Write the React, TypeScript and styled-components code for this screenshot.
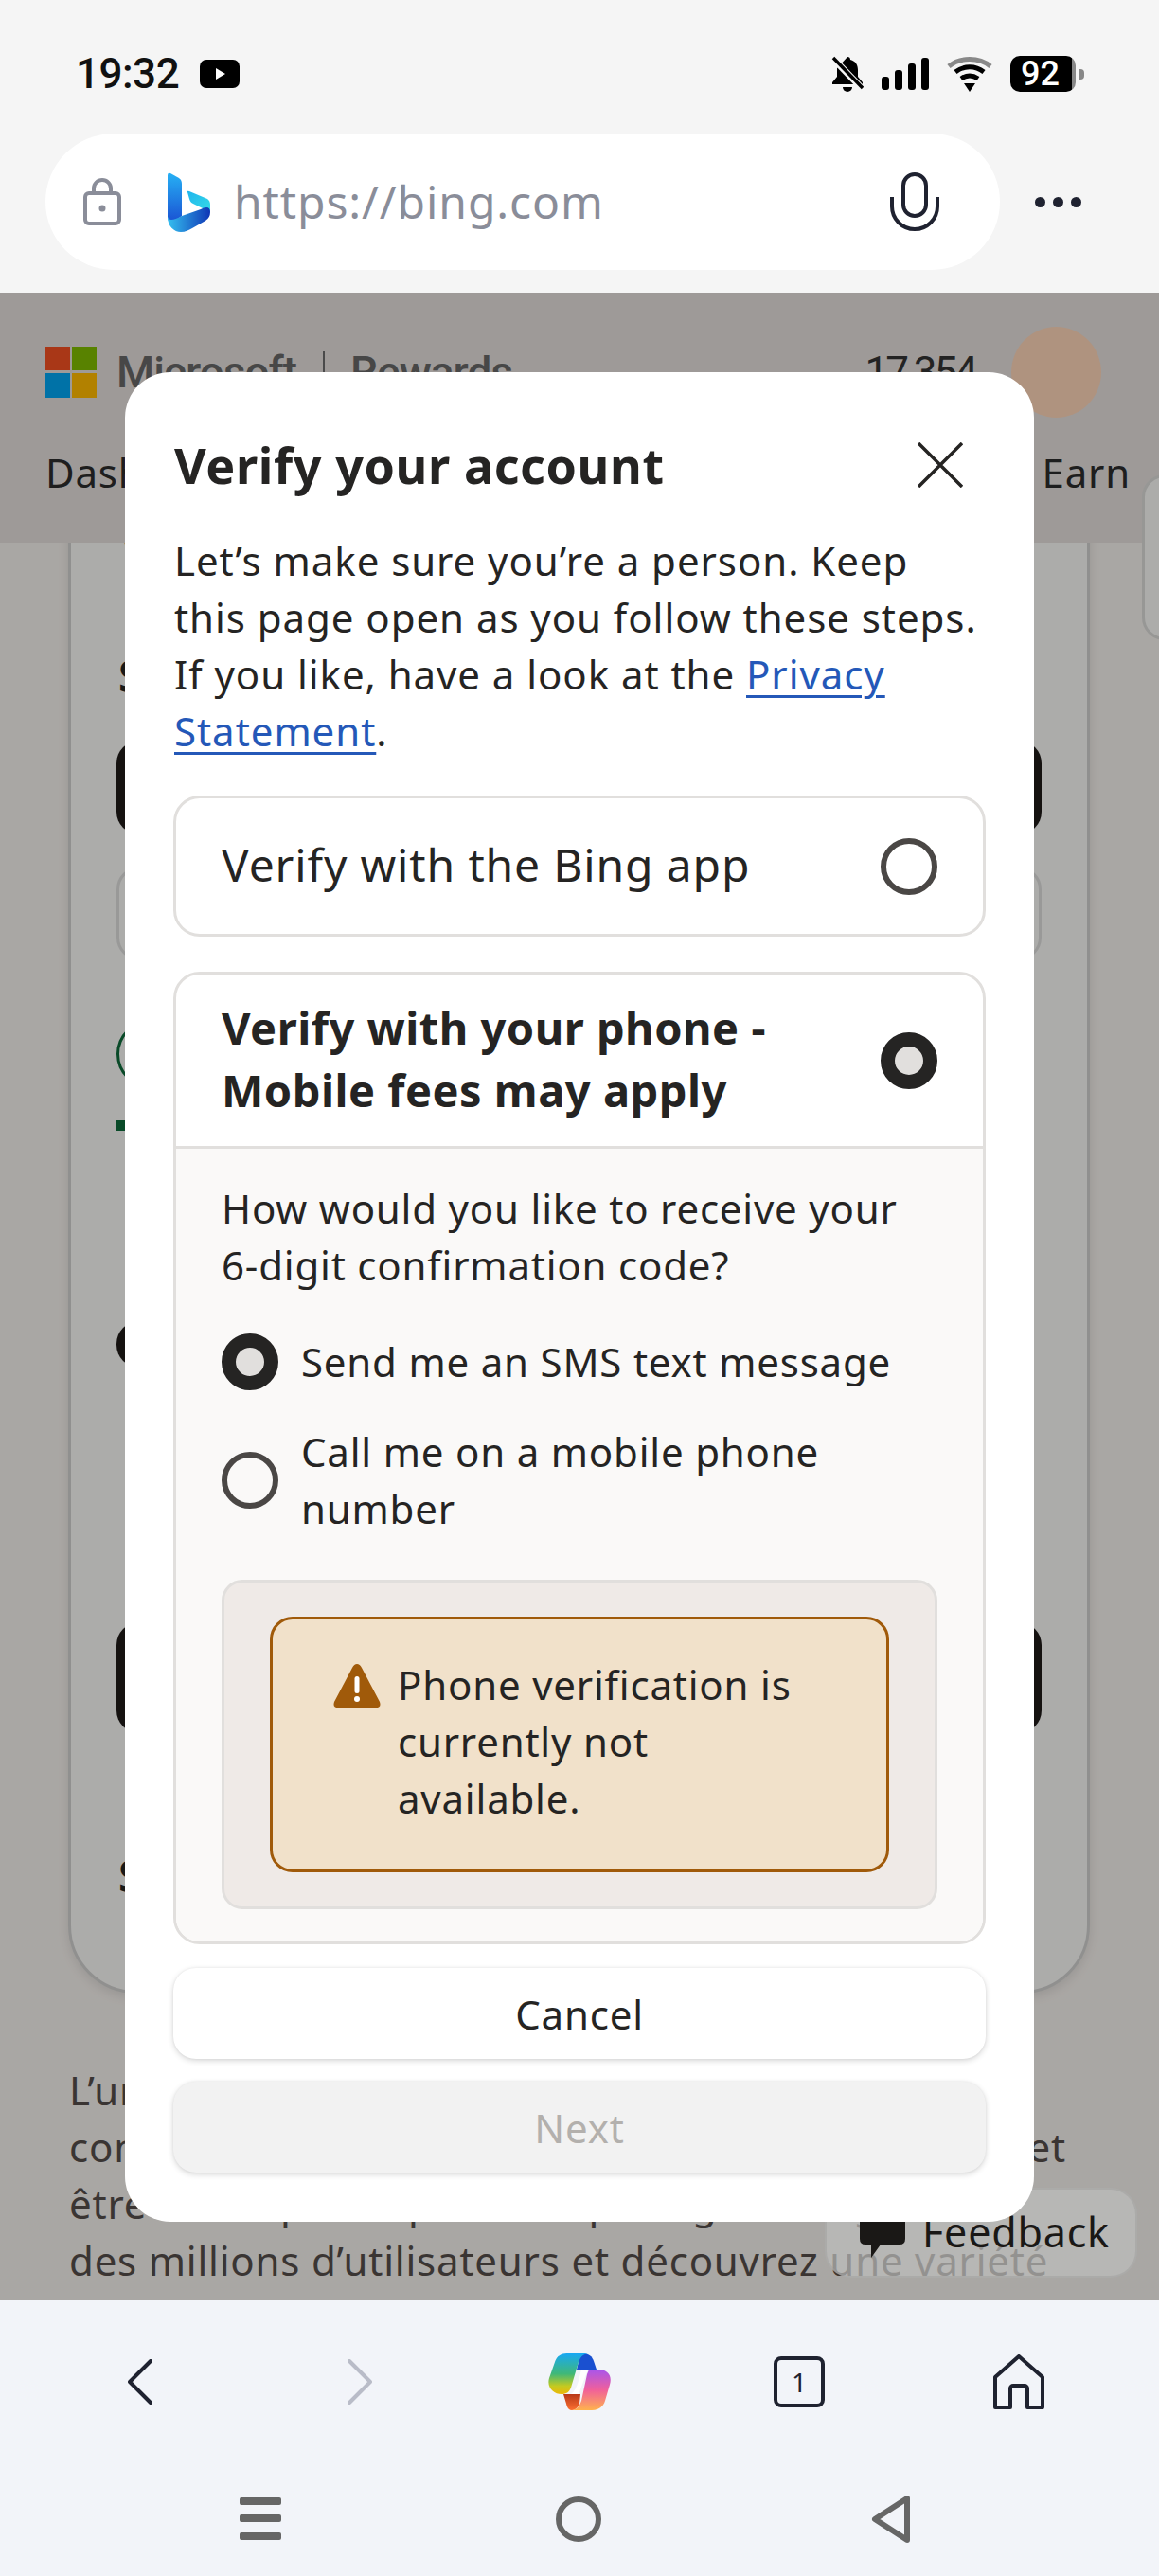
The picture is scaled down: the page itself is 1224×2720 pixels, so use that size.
import * as React from "react"
import styled, { createGlobalStyle } from "styled-components"

const GlobalStyle = createGlobalStyle`
  html, body {
    margin: 0;
    padding: 0;
    background: #f5f5f5;
  }
  * {
    box-sizing: border-box;
  }
`

const Screen = styled.div`
  width: 1224px;
  height: 2720px;
  display: flex;
  flex-direction: column;
  overflow: hidden;
  font-family: "Noto Sans", "Open Sans", sans-serif;
  letter-spacing: 0.8px;
  color: #252423;
`

/* top chrome */
const StatusBar = styled.div`
  height: 141px;
  padding: 56px 80px 0;
  display: flex;
  background: #f5f5f5;
`
const StatusLeft = styled.div`
  display: flex;
  align-items: center;
  gap: 22px;
  height: 44px;
`
const Clock = styled.span`
  font-family: Roboto, sans-serif;
  font-size: 44px;
  font-weight: 500;
  line-height: 44px;
  letter-spacing: -0.5px;
  color: #111;
`
const StatusRight = styled.div`
  margin-left: auto;
  display: flex;
  align-items: center;
  height: 44px;
  gap: 19px;
`
const Battery = styled.div`
  width: 69px;
  height: 38px;
  border-radius: 10px;
  background: linear-gradient(90deg, #000 0 65px, #888 65px);
  color: #fff;
  font-family: Roboto, sans-serif;
  font-size: 36px;
  font-weight: 500;
  letter-spacing: 0;
  line-height: 38px;
  text-align: center;
  padding-right: 6px;
`
const BatteryWrap = styled.div`
  display: flex;
  align-items: center;
  gap: 4px;
  margin-right: -1px;
`
const BatteryNub = styled.div`
  width: 5px;
  height: 11px;
  border-radius: 0 4px 4px 0;
  background: #888;
`
const AddressRow = styled.div`
  height: 168px;
  padding-left: 48px;
  display: flex;
  background: #f5f5f5;
`
const AddressPill = styled.div`
  width: 1008px;
  height: 144px;
  border-radius: 72px;
  background: #fff;
  display: flex;
  align-items: center;
  padding-left: 40px;
`
const LockGap = styled.span`
  width: 49px;
`
const Url = styled.span`
  margin-left: 25px;
  font-size: 48px;
  line-height: 60px;
  letter-spacing: 0.9px;
  color: #8a8d99;
`
const MicSlot = styled.div`
  margin-left: auto;
  margin-right: 64px;
  display: flex;
`
const MoreDots = styled.div`
  margin: 72px 0 0 37px;
  height: 0;
  display: flex;
  gap: 8px;
  align-items: center;
`
const Dot = styled.i`
  width: 11px;
  height: 11px;
  border-radius: 50%;
  background: #1f2230;
`

/* dimmed page behind the dialog */
const Page = styled.div`
  flex: 1;
  position: relative;
  overflow: hidden;
  background: #f3efeb;
`
const PageHeader = styled.div`
  position: relative;
  z-index: 1;
  height: 264px;
  background: #e2ddda;
  padding: 57px 61px 0 48px;
`
const BrandRow = styled.div`
  display: flex;
  align-items: center;
  height: 54px;
`
const BrandName = styled.span`
  margin-left: ${p => p.$left}px;
  font-family: Roboto, sans-serif;
  font-size: 46px;
  font-weight: 500;
  letter-spacing: -1px;
  color: #666;
`
const BrandDivider = styled.i`
  width: 2px;
  height: 44px;
  margin: 0 27px 0 28px;
  background: #6b6b6b;
`
const Points = styled.span`
  margin-left: auto;
  margin-right: 38px;
  font-family: Roboto, sans-serif;
  font-size: 44px;
  letter-spacing: -3px;
  color: #333;
`
const Avatar = styled.div`
  width: 95px;
  height: 96px;
  border-radius: 50%;
  background: #fbd3b7;
`
const TabRow = styled.div`
  display: flex;
  justify-content: space-between;
  margin: 50px -31px 0 0;
  font-size: 42px;
  color: #2b2b2b;
`
const ContentCard = styled.div`
  margin: -60px 73px 0 72px;
  height: 1592px;
  padding: 0 50px;
  border: 3px solid #cfcfcd;
  border-radius: 0 0 72px 72px;
  background: #f6f6f4;
  box-shadow: 0 4px 12px rgba(0, 0, 0, 0.1);
`
const CardHeading = styled.div`
  font-size: 46px;
  line-height: 60px;
  font-weight: 700;
  margin-top: ${p => p.$top}px;
`
const DarkButton = styled.div`
  height: ${p => p.$height}px;
  margin: ${p => p.$top}px -2px 0;
  border-radius: 24px;
  background: #1f1b18;
`
const GhostButton = styled.div`
  height: 99px;
  margin: 34px -2px 0;
  border-radius: 24px;
  border: 3px solid #dcdcda;
`
const GreenRing = styled.div`
  width: 72px;
  height: 72px;
  margin: 63px 0 0 -2px;
  border-radius: 50%;
  border: 3px solid #0e6b3a;
`
const GreenBar = styled.div`
  width: 40px;
  height: 11px;
  margin: 34px 0 0 -2px;
  background: #0e6b3a;
`
const DarkPill = styled.div`
  width: 60px;
  height: 49px;
  margin: 201px 0 0 -2px;
  border-radius: 24px;
  background: #1f1b18;
`
const Paragraph = styled.div`
  margin: 72px 0 0 73px;
  width: 1100px;
  font-size: 42px;
  line-height: 60px;
  color: #534d49;
`
const ParagraphLine = styled.div`
  white-space: nowrap;
`
const JustifiedLine = styled.div`
  width: 1053px;
  text-align: justify;
  text-align-last: justify;
`
const Scrim = styled.div`
  position: absolute;
  inset: 0;
  z-index: 2;
  background: rgba(0, 0, 0, 0.3);
`
const EdgeTab = styled.div`
  position: absolute;
  right: -10px;
  top: 192px;
  z-index: 1;
  width: 28px;
  height: 175px;
  border: 3px solid #d8d8d6;
  border-radius: 24px 0 0 24px;
  background: #f6f6f4;
`
const FeedbackButton = styled.div`
  position: absolute;
  z-index: 3;
  left: 871px;
  top: 2001px;
  width: 330px;
  height: 95px;
  border-radius: 28px;
  border: 2px solid rgba(160, 160, 158, 0.5);
  background: rgba(190, 190, 188, 0.68);
  display: flex;
  align-items: center;
  gap: 18px;
  padding: 0 0 2px 35px;
  font-size: 43px;
  color: #1a1816;
`
const FeedbackGlyph = styled.svg`
  flex: none;
  margin-top: 10px;
`

/* dialog */
const Dialog = styled.div`
  position: absolute;
  z-index: 4;
  left: 132px;
  top: 84px;
  width: 960px;
  height: 1953px;
  padding: 62px 51px 0;
  border-radius: 48px;
  background: #fff;
  display: flex;
  flex-direction: column;
`
const DialogHead = styled.div`
  display: flex;
  align-items: center;
  justify-content: space-between;
  padding: 0 24px 0 1px;
`
const DialogTitle = styled.h2`
  margin: 0;
  font-size: 52px;
  line-height: 72px;
  font-weight: 700;
  letter-spacing: 0.6px;
`
const Intro = styled.p`
  margin: 35px 0 38px;
  padding-left: 1px;
  font-size: 42px;
  line-height: 60px;
  letter-spacing: 0.95px;
`
const Link = styled.a`
  color: #2458b8;
  text-decoration: underline;
  text-decoration-thickness: 3px;
  text-underline-offset: 6px;
`
const OptionCard = styled.div`
  border: 3px solid #e1dfdd;
  border-radius: 28px;
  overflow: hidden;
  margin-bottom: ${p => p.$gap}px;
`
const OptionHead = styled.div`
  min-height: ${p => p.$min}px;
  padding: 0 48px;
  display: flex;
  align-items: center;
  justify-content: space-between;
  font-size: ${p => (p.$active ? 47 : 48)}px;
  line-height: 66px;
  font-weight: ${p => (p.$active ? 700 : 400)};
  letter-spacing: ${p => (p.$active ? 0.5 : 0.85)}px;
`
const OptionLabel = styled.span`
  margin-top: -3px;
`
const Radio = styled.span`
  flex: none;
  width: 60px;
  height: 60px;
  border-radius: 50%;
  border: ${p => (p.$checked ? "15px solid #252423" : "6px solid #4a4745")};
  background: ${p => (p.$checked ? "#e1dfdd" : "transparent")};
`
const OptionBody = styled.div`
  border-top: 3px solid #e1dfdd;
  background: #faf9f8;
  padding: 33px 48px 34px;
  font-size: 42px;
  line-height: 60px;
`
const Question = styled.div`
  margin-bottom: 42px;
`
const ChoiceRow = styled.div`
  display: flex;
  align-items: center;
  gap: 24px;
  margin-bottom: ${p => p.$gap}px;
`
const NoticeBox = styled.div`
  padding: 36px 48px;
  border: 3px solid #e1dfdd;
  border-radius: 22px;
  background: #efeae7;
`
const NoticeInner = styled.div`
  height: 270px;
  padding: 39px 80px 0 64px;
  border: 3px solid #a05a0a;
  border-radius: 24px;
  background: #f1e1ca;
  display: flex;
  gap: 18px;
`
const ActionButton = styled.div`
  height: 96px;
  margin-top: ${p => p.$top}px;
  border-radius: 24px;
  background: ${p => (p.$disabled ? "#f2f2f2" : "#fff")};
  color: ${p => (p.$disabled ? "#b3b0ad" : "#252423")};
  box-shadow: 0 2px 6px rgba(0, 0, 0, 0.16), 0 0 3px rgba(0, 0, 0, 0.06);
  display: flex;
  align-items: center;
  justify-content: center;
  font-size: 42px;
`

/* bottom chrome */
const Toolbar = styled.div`
  height: 291px;
  background: #f2f4f9;
  display: flex;
  flex-direction: column;
`
const ToolRow = styled.div`
  display: grid;
  grid-template-columns: repeat(5, 232px);
  justify-content: center;
  justify-items: center;
  align-items: center;
  height: 117px;
  margin-top: 27px;
`
const NavRow = styled.div`
  display: grid;
  grid-template-columns: 338px 333px 328px;
  justify-content: center;
  justify-items: center;
  align-items: center;
  margin-top: 62px;
  padding-right: 13px;
`
const TabCount = styled.div`
  width: 54px;
  height: 54px;
  border: 4px solid #1f2230;
  border-radius: 8px;
  text-align: center;
  font-size: 28px;
  letter-spacing: 0;
  line-height: 46px;
  color: #1f2230;
`
const WarningGlyph = styled.svg`
  flex: none;
  margin-top: 7px;
`

const BellOff = () => (
  <svg width="34" height="40" viewBox="0 0 34 40">
    <path d="M17 2a3 3 0 0 1 3 3c6 1.500 8 6 8 11v7l5 6v2H1v-2l5-6v-9z" fill="#000" />
    <path d="M12 34h10a5 5 0 0 1-10 0z" fill="#000" />
    <path d="M1 3l32 33" stroke="#f5f5f5" strokeWidth="7" />
    <path d="M2 3l31 32" stroke="#000" strokeWidth="3.500" />
  </svg>
)

const Signal = () => (
  <svg width="50" height="34" viewBox="0 0 50 34" fill="#000">
    <rect x="0" y="20" width="8" height="14" rx="3" />
    <rect x="14" y="13" width="8" height="21" rx="3" />
    <rect x="28" y="6" width="8" height="28" rx="3" />
    <rect x="42" y="0" width="8" height="34" rx="3" />
  </svg>
)

const Wifi = () => (
  <svg width="48" height="38" viewBox="0 0 48 38" fill="none">
    <path d="M2 11c12-10 32-10 44 0" stroke="#888" strokeWidth="5" />
    <path d="M9 17c9-7 21-7 30 0" stroke="#000" strokeWidth="5" />
    <path d="M15 24c6-4 12-4 18 0" stroke="#000" strokeWidth="5" />
    <path d="M18 29h12l-6 9z" fill="#000" />
  </svg>
)

const Lock = () => (
  <svg width="40" height="50" viewBox="0 0 40 50" fill="none">
    <rect x="2" y="16" width="36" height="32" rx="4" stroke="#8a8d99" strokeWidth="4" />
    <path d="M11 16V11a9 9 0 0 1 18 0v5" stroke="#8a8d99" strokeWidth="4" />
    <circle cx="20" cy="32" r="3.500" fill="#8a8d99" />
  </svg>
)

const BingLogo = () => (
  <svg width="45" height="63" viewBox="0 0 45 63">
    <defs>
      <linearGradient id="bingStem" x1="0" y1="0" x2="0" y2="1">
        <stop offset="0" stopColor="#26b0f4" />
        <stop offset="1" stopColor="#1a4fd2" />
      </linearGradient>
      <linearGradient id="bingRibbon" x1="0" y1="0" x2="1" y2="0">
        <stop offset="0" stopColor="#35c0f0" />
        <stop offset="1" stopColor="#0f35b5" />
      </linearGradient>
      <linearGradient id="bingLeaf" x1="0" y1="0" x2="1" y2="1">
        <stop offset="0" stopColor="#1fb4ee" />
        <stop offset="1" stopColor="#36dce6" />
      </linearGradient>
    </defs>
    <path d="M21 21q-1-2 2-1l19 8q3 2 3 6v8L27 33q-3-1-4-5z" fill="url(#bingLeaf)" />
    <path d="M0 3q0-3 3-2l9 5q3 2 3 6v34L4 54Q0 52 0 47z" fill="url(#bingStem)" />
    <path d="M0 47c0 10 7 16 14 16 5 0 8-2 12-4l14-8q5-3 5-9 0-5-4-5-3 0-6 2L15 46Q8 50 4 50 1 50 0 47z" fill="url(#bingRibbon)" />
  </svg>
)

const Mic = () => (
  <svg width="52" height="62" viewBox="0 0 52 62" fill="none" stroke="#1f2230" strokeWidth="4">
    <rect x="14" y="2" width="24" height="44" rx="12" />
    <path d="M2 26v10a24 24 0 0 0 48 0V26" />
  </svg>
)

const MsLogo = () => (
  <svg width="54" height="54" viewBox="0 0 54 54">
    <rect width="26" height="25" fill="#f25022" />
    <rect x="28" width="26" height="25" fill="#7fba00" />
    <rect y="28" width="26" height="26" fill="#00a4ef" />
    <rect x="28" y="28" width="26" height="26" fill="#ffb900" />
  </svg>
)

const CloseIcon = () => (
  <svg width="48" height="48" viewBox="0 0 48 48" stroke="#252423" strokeWidth="3.500">
    <path d="M1 1l46 46M47 1L1 47" />
  </svg>
)

const WarningIcon = () => (
  <WarningGlyph width="50" height="48" viewBox="0 0 50 48">
    <path d="M25 1q3 0 5 4l19 36q2 6-4 6H5q-6 0-4-6L20 5q2-4 5-4z" fill="#a05a0a" />
    <rect x="22.500" y="14" width="5" height="18" rx="2.500" fill="#fff" />
    <circle cx="25" cy="38" r="3" fill="#fff" />
  </WarningGlyph>
)

const Chevron = ({ left, color }: { left?: boolean; color: string }) => (
  <svg width="26" height="48" viewBox="0 0 26 48" fill="none" stroke={color} strokeWidth="4" strokeLinecap="round" strokeLinejoin="round">
    <path d={left ? "M24 2L2 24l22 22" : "M2 2l22 22L2 46"} />
  </svg>
)

const CopilotLogo = () => (
  <svg width="66" height="60" viewBox="0 0 66 60">
    <defs>
      <linearGradient id="cpLeft" x1="0" y1="0" x2="0" y2="1">
        <stop offset="0" stopColor="#18a8f4" />
        <stop offset="0.5" stopColor="#40b878" />
        <stop offset="0.8" stopColor="#c4ca20" />
        <stop offset="1" stopColor="#ecb808" />
      </linearGradient>
      <linearGradient id="cpRight" x1="0" y1="0" x2="0" y2="1">
        <stop offset="0" stopColor="#a855ec" />
        <stop offset="0.5" stopColor="#f0609a" />
        <stop offset="1" stopColor="#ffb24e" />
      </linearGradient>
      <linearGradient id="cpLow" x1="0" y1="0" x2="0" y2="1">
        <stop offset="0" stopColor="#b83818" />
        <stop offset="1" stopColor="#fb7030" />
      </linearGradient>
    </defs>
    <path d="M34 0C44 0 46 3 48 8l3 9H30z" fill="#1a50d0" />
    <path d="M42 17L32 43H24c4-3 6-8 8-14l3-12z" fill="#fff" />
    <path d="M16 43h18l-1 10c-2 5-5 7-8 7s-5-2-6-7z" fill="url(#cpLow)" />
    <path d="M14 1c2-1 4-1 8-1h20c-6 1-8 4-10 9l-8 27c-2 5-5 7-10 7C6 43-2 36 1 26L7 9c2-5 3-6 7-8z" fill="url(#cpLeft)" />
    <path d="M43 17h11c8 0 14 6 11 16l-5 17c-2 7-8 10-14 10H25c6-1 8-5 10-10l6-28z" fill="url(#cpRight)" />
  </svg>
)

const HomeIcon = () => (
  <svg width="54" height="58" viewBox="0 0 54 58" fill="none" stroke="#1f2230" strokeWidth="4" strokeLinejoin="round">
    <path d="M2 24L27 2l25 22v32H36V36a3 3 0 0 0-3-3H21a3 3 0 0 0-3 3v20H2z" />
  </svg>
)

const MenuIcon = () => (
  <svg width="44" height="46" viewBox="0 0 44 46" fill="#666">
    <rect width="44" height="8" y="0" rx="2" />
    <rect width="44" height="8" y="18" rx="2" />
    <rect width="44" height="8" y="37" rx="2" />
  </svg>
)

const HomeCircle = () => (
  <svg width="48" height="48" viewBox="0 0 48 48" fill="none" stroke="#666" strokeWidth="6">
    <circle cx="24" cy="24" r="21" />
  </svg>
)

const BackTriangle = () => (
  <svg width="42" height="50" viewBox="0 0 42 50" fill="none" stroke="#666" strokeWidth="6" strokeLinejoin="round">
    <path d="M38 3v44L4 25z" />
  </svg>
)

const YouTubeIcon = () => (
  <svg width="42" height="30" viewBox="0 0 42 30">
    <rect width="42" height="30" rx="7" fill="#000" />
    <path d="M17 9l10 6-10 6z" fill="#fff" />
  </svg>
)

export default function App() {
  return (
    <Screen>
      <GlobalStyle />
      <StatusBar>
        <StatusLeft>
          <Clock>19:32</Clock>
          <YouTubeIcon />
        </StatusLeft>
        <StatusRight>
          <BellOff />
          <Signal />
          <Wifi />
          <BatteryWrap>
            <Battery>92</Battery>
            <BatteryNub />
          </BatteryWrap>
        </StatusRight>
      </StatusBar>
      <AddressRow>
        <AddressPill>
          <Lock />
          <LockGap />
          <BingLogo />
          <Url>https://bing.com</Url>
          <MicSlot>
            <Mic />
          </MicSlot>
        </AddressPill>
        <MoreDots>
          <Dot />
          <Dot />
          <Dot />
        </MoreDots>
      </AddressRow>

      <Page>
        <PageHeader>
          <BrandRow>
            <MsLogo />
            <BrandName $left={21}>Microsoft</BrandName>
            <BrandDivider />
            <BrandName $left={0}>Rewards</BrandName>
            <Points>17 354</Points>
            <Avatar />
          </BrandRow>
          <TabRow>
            <span>Dashboard</span>
            <span>Earn</span>
          </TabRow>
        </PageHeader>
        <ContentCard>
          <CardHeading $top={22}>Vérifiez</CardHeading>
          <CardHeading $top={85}>Se connecter</CardHeading>
          <DarkButton $top={39} $height={99} />
          <GhostButton />
          <GreenRing />
          <GreenBar />
          <DarkPill />
          <DarkButton $top={269} $height={117} />
          <CardHeading $top={120}>Suivant</CardHeading>
        </ContentCard>
        <Paragraph>
          <ParagraphLine>L’univers de Bing vous récompense</ParagraphLine>
          <JustifiedLine>consultez vos offres, jouez et gagnez des points et</JustifiedLine>
          <ParagraphLine>être récompensé pour vos partages en ligne</ParagraphLine>
          <ParagraphLine>des millions d’utilisateurs et découvrez une variété</ParagraphLine>
        </Paragraph>
        <EdgeTab />
        <Scrim />
        <FeedbackButton>
          <FeedbackGlyph width="48" height="72" viewBox="0 0 48 72">
            <path d="M6 0h36q6 0 6 6v32q0 6-6 6H22L12 58V44H6q-6 0-6-6V6q0-6 6-6z" fill="#1a1816" />
          </FeedbackGlyph>
          Feedback
        </FeedbackButton>

        <Dialog>
          <DialogHead>
            <DialogTitle>Verify your account</DialogTitle>
            <CloseIcon />
          </DialogHead>
          <Intro>
            Let’s make sure you’re a person. Keep this page open as you follow these steps. If you like, have a look at the{" "}
            <Link>Privacy Statement</Link>.
          </Intro>
          <OptionCard $gap={37}>
            <OptionHead $min={143}>
              <OptionLabel>Verify with the Bing app</OptionLabel>
              <Radio />
            </OptionHead>
          </OptionCard>
          <OptionCard $gap={25}>
            <OptionHead $min={181} $active>
              <OptionLabel>
                Verify with your phone -
                <br />
                Mobile fees may apply
              </OptionLabel>
              <Radio $checked />
            </OptionHead>
            <OptionBody>
              <Question>How would you like to receive your 6-digit confirmation code?</Question>
              <ChoiceRow $gap={35}>
                <Radio $checked />
                Send me an SMS text message
              </ChoiceRow>
              <ChoiceRow $gap={45}>
                <Radio />
                <span>
                  Call me on a mobile phone
                  <br />
                  number
                </span>
              </ChoiceRow>
              <NoticeBox>
                <NoticeInner>
                  <WarningIcon />
                  <span>Phone verification is currently not available.</span>
                </NoticeInner>
              </NoticeBox>
            </OptionBody>
          </OptionCard>
          <ActionButton>Cancel</ActionButton>
          <ActionButton $top={24} $disabled>
            Next
          </ActionButton>
        </Dialog>
      </Page>

      <Toolbar>
        <ToolRow>
          <Chevron left color="#1f2230" />
          <Chevron color="#b9bcc8" />
          <CopilotLogo />
          <TabCount>1</TabCount>
          <HomeIcon />
        </ToolRow>
        <NavRow>
          <MenuIcon />
          <HomeCircle />
          <BackTriangle />
        </NavRow>
      </Toolbar>
    </Screen>
  )
}
